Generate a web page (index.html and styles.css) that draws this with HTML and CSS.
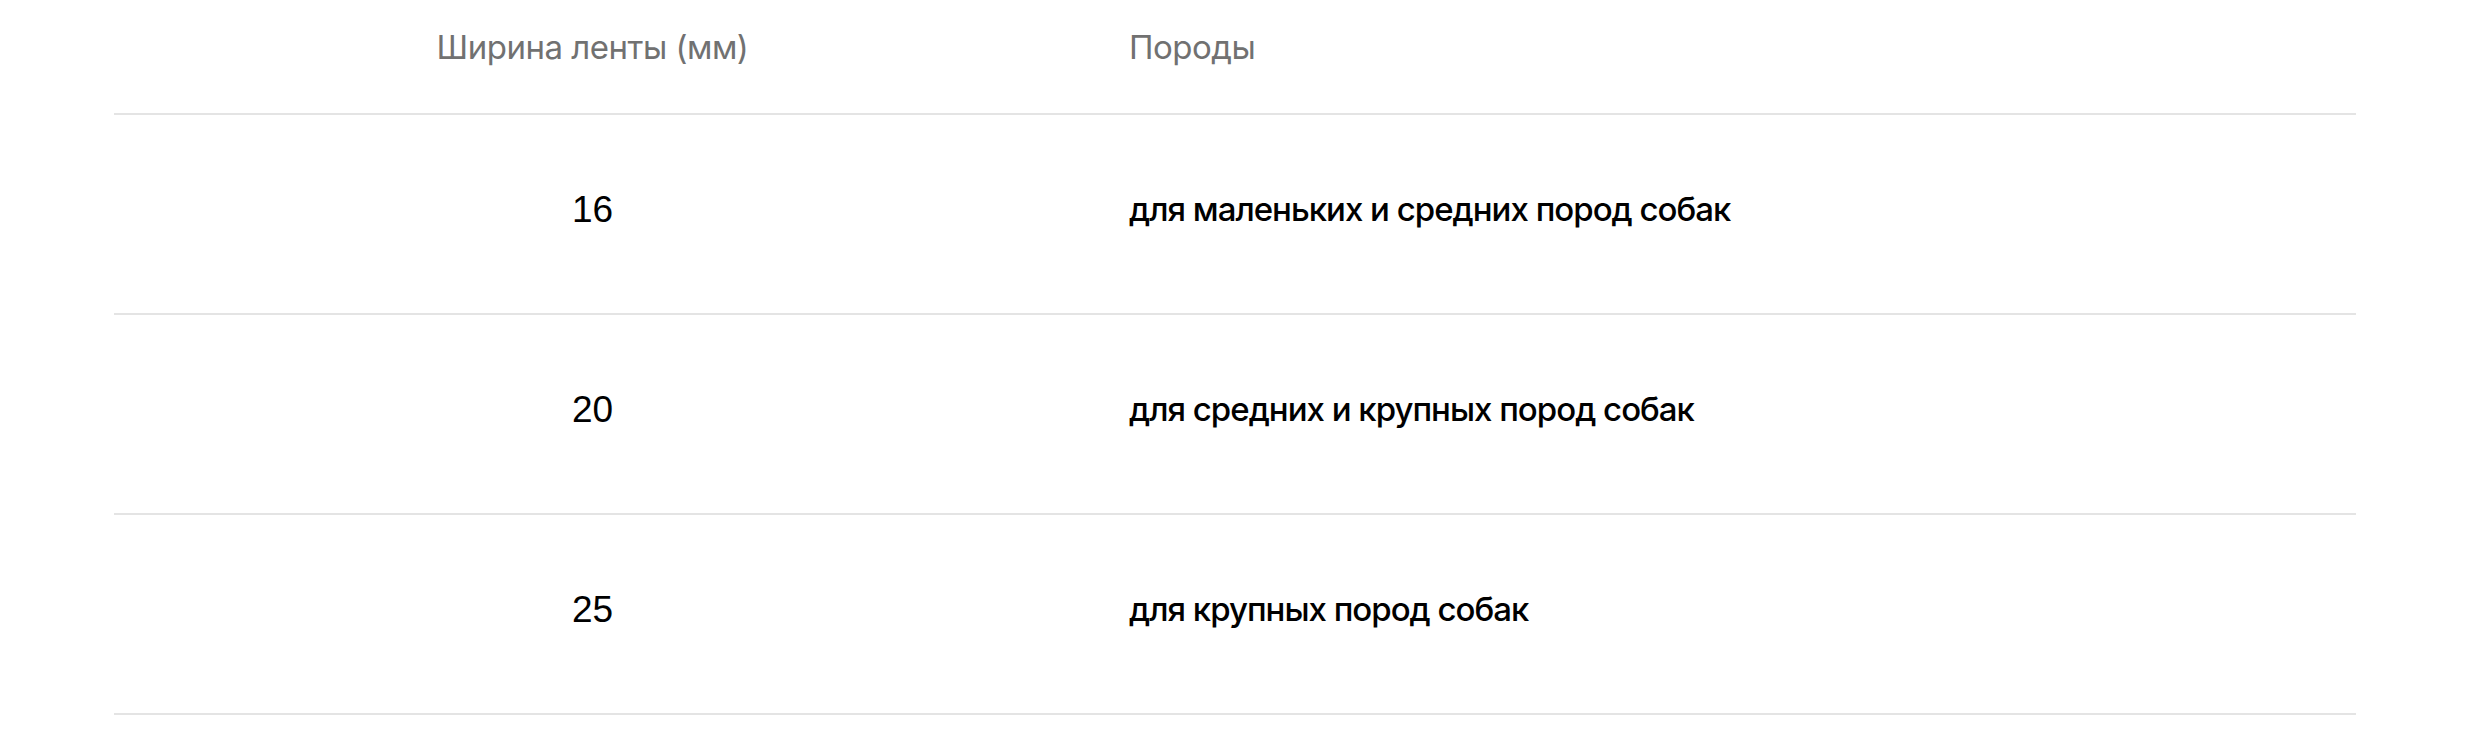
FILE: index.html
```html
<!DOCTYPE html>
<html lang="ru">
<head>
<meta charset="utf-8">
<title>Ширина ленты</title>
<link rel="stylesheet" href="styles.css">
</head>
<body>
<div class="table">
  <div class="row head">
    <div class="cell c1">Ширина ленты (мм)</div>
    <div class="cell c2">Породы</div>
  </div>
  <div class="row">
    <div class="cell c1 num">16</div>
    <div class="cell c2">для маленьких и средних пород собак</div>
  </div>
  <div class="row">
    <div class="cell c1 num">20</div>
    <div class="cell c2">для средних и крупных пород собак</div>
  </div>
  <div class="row">
    <div class="cell c1 num">25</div>
    <div class="cell c2">для крупных пород собак</div>
  </div>
</div>
</body>
</html>
```
FILE: styles.css
```css
html, body {
  margin: 0;
  padding: 0;
  background: #fff;
}
body {
  font-family: Inter, "Noto Sans", sans-serif;
  color: #000;
}
.table {
  margin-left: 114px;
  width: 2242px;
}
.row {
  display: grid;
  grid-template-columns: 957px 1fr;
  align-items: center;
  height: 198px;
  border-bottom: 2px solid #e4e4e4;
}
.row.head {
  height: 113px;
  align-items: start;
}
.cell {
  font-size: 33px;
  line-height: 41px;
  font-weight: 500;
  letter-spacing: -1px;
}
.head .cell {
  color: #717171;
  font-weight: 400;
  letter-spacing: -0.5px;
  padding-top: 27px;
}
.c1 {
  text-align: center;
}
.c2 {
  padding-left: 58px;
}
.num {
  font-family: "Liberation Sans", Arial, sans-serif;
  font-size: 37px;
  font-weight: 400;
  letter-spacing: 0;
}
.row:not(.head) .cell {
  padding-bottom: 10px;
}
```
